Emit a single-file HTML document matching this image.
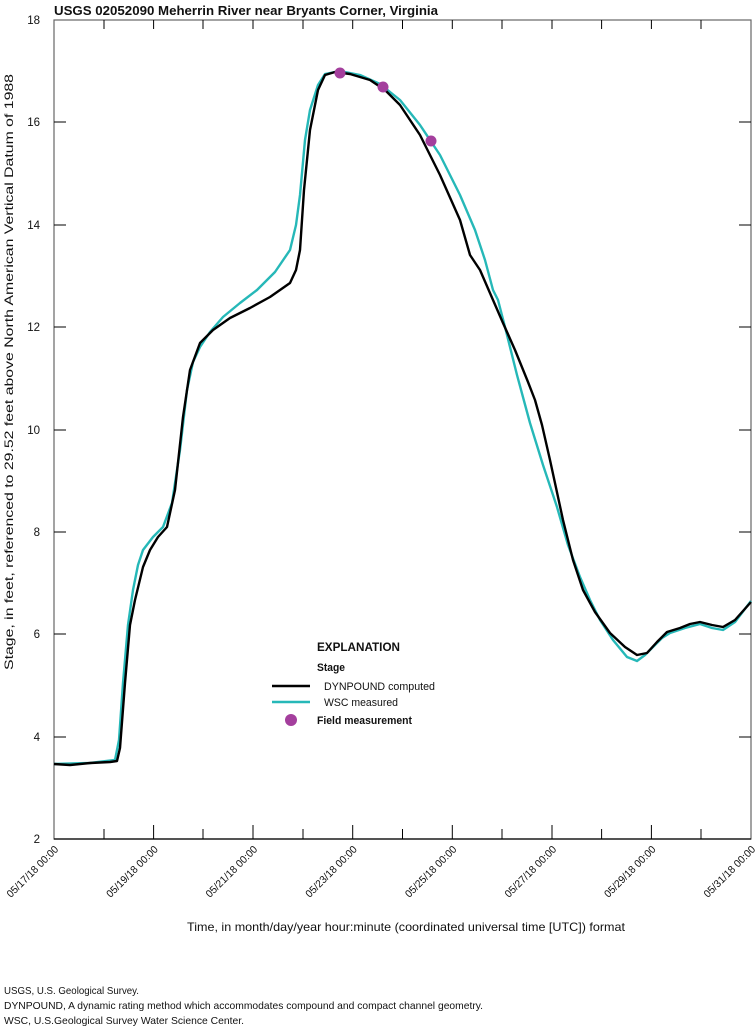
<!DOCTYPE html>
<html><head><meta charset="utf-8"><style>
html,body{margin:0;padding:0;background:#fff}
svg{display:block}
text{font-family:"Liberation Sans",sans-serif;fill:#111}
</style></head><body>
<svg width="756" height="1029" viewBox="0 0 756 1029" xmlns="http://www.w3.org/2000/svg">
<text x="54" y="15" font-size="13" font-weight="bold" textLength="384" lengthAdjust="spacingAndGlyphs">USGS 02052090 Meherrin River near Bryants Corner, Virginia</text>
<rect x="54" y="20" width="697" height="819" fill="none" stroke="#666" stroke-width="1.2"/>
<line x1="54" y1="839" x2="751" y2="839" stroke="#000" stroke-width="1.3"/>
<g stroke="#000" stroke-width="1">
<line x1="54" y1="122" x2="66" y2="122"/><line x1="54" y1="225" x2="66" y2="225"/><line x1="54" y1="327" x2="66" y2="327"/><line x1="54" y1="430" x2="66" y2="430"/><line x1="54" y1="532" x2="66" y2="532"/><line x1="54" y1="634" x2="66" y2="634"/><line x1="54" y1="737" x2="66" y2="737"/>
<line x1="751" y1="122" x2="739" y2="122"/><line x1="751" y1="225" x2="739" y2="225"/><line x1="751" y1="327" x2="739" y2="327"/><line x1="751" y1="430" x2="739" y2="430"/><line x1="751" y1="532" x2="739" y2="532"/><line x1="751" y1="634" x2="739" y2="634"/><line x1="751" y1="737" x2="739" y2="737"/>
<line x1="104" y1="839" x2="104" y2="829"/><line x1="153.6" y1="839" x2="153.6" y2="825"/>
<line x1="203" y1="839" x2="203" y2="829"/><line x1="253" y1="839" x2="253" y2="825"/>
<line x1="303" y1="839" x2="303" y2="829"/><line x1="352.7" y1="839" x2="352.7" y2="825"/>
<line x1="402.5" y1="839" x2="402.5" y2="829"/><line x1="452.3" y1="839" x2="452.3" y2="825"/>
<line x1="502" y1="839" x2="502" y2="829"/><line x1="552" y1="839" x2="552" y2="825"/>
<line x1="601.6" y1="839" x2="601.6" y2="829"/><line x1="651.4" y1="839" x2="651.4" y2="825"/>
<line x1="701" y1="839" x2="701" y2="829"/>
<line x1="104" y1="20" x2="104" y2="29"/><line x1="153.6" y1="20" x2="153.6" y2="29"/><line x1="203" y1="20" x2="203" y2="29"/><line x1="253" y1="20" x2="253" y2="29"/><line x1="303" y1="20" x2="303" y2="29"/><line x1="352.7" y1="20" x2="352.7" y2="29"/><line x1="402.5" y1="20" x2="402.5" y2="29"/><line x1="452.3" y1="20" x2="452.3" y2="29"/><line x1="502" y1="20" x2="502" y2="29"/><line x1="552" y1="20" x2="552" y2="29"/><line x1="601.6" y1="20" x2="601.6" y2="29"/><line x1="651.4" y1="20" x2="651.4" y2="29"/><line x1="701" y1="20" x2="701" y2="29"/>
</g>
<g font-size="11.5" text-anchor="end">
<text x="40" y="24">18</text><text x="40" y="126">16</text><text x="40" y="229">14</text><text x="40" y="331">12</text><text x="40" y="434">10</text><text x="40" y="536">8</text><text x="40" y="638">6</text><text x="40" y="741">4</text><text x="40" y="843">2</text>
</g>
<text transform="translate(13,372) rotate(-90)" font-size="12" text-anchor="middle" textLength="596" lengthAdjust="spacingAndGlyphs">Stage, in feet, referenced to 29.52 feet above North American Vertical Datum of 1988</text>
<g font-size="10.5" text-anchor="end">
<text transform="translate(59,850) rotate(-45)" textLength="68" lengthAdjust="spacingAndGlyphs">05/17/18 00:00</text>
<text transform="translate(158.6,850) rotate(-45)" textLength="68" lengthAdjust="spacingAndGlyphs">05/19/18 00:00</text>
<text transform="translate(258,850) rotate(-45)" textLength="68" lengthAdjust="spacingAndGlyphs">05/21/18 00:00</text>
<text transform="translate(357.7,850) rotate(-45)" textLength="68" lengthAdjust="spacingAndGlyphs">05/23/18 00:00</text>
<text transform="translate(457.3,850) rotate(-45)" textLength="68" lengthAdjust="spacingAndGlyphs">05/25/18 00:00</text>
<text transform="translate(557,850) rotate(-45)" textLength="68" lengthAdjust="spacingAndGlyphs">05/27/18 00:00</text>
<text transform="translate(656.4,850) rotate(-45)" textLength="68" lengthAdjust="spacingAndGlyphs">05/29/18 00:00</text>
<text transform="translate(756,850) rotate(-45)" textLength="68" lengthAdjust="spacingAndGlyphs">05/31/18 00:00</text>
</g>
<text x="187" y="931" font-size="12" textLength="438" lengthAdjust="spacingAndGlyphs">Time, in month/day/year hour:minute (coordinated universal time [UTC]) format</text>
<polyline fill="none" stroke="#26b8b8" stroke-width="2.4" stroke-linejoin="round" points="54,764 90,763 115,760 119,740 123,683 128,625 133,590 138,565 143,550 153,537 163,527 172,503 180,450 187,390 193,362 200,347 210,332 223,317 240,303 257,290 275,272 290,250 296,225 300,195 305,140 310,110 318,85 325,74 340,71 360,75 380,84 400,100 420,125 440,155 460,195 475,230 485,260 493,290 498,300 505,327 517,375 530,423 543,465 557,507 568,545 580,577 590,600 600,620 613,640 627,657 637,661 645,655 653,647 662,638 670,633 685,628 700,624 712,628 723,630 735,622 751,601"/>
<polyline fill="none" stroke="#000" stroke-width="2.4" stroke-linejoin="round" points="54,764 70,765 90,763 110,762 117,761 120,748 125,683 130,625 135,600 143,567 150,550 158,537 167,527 175,490 183,417 190,370 200,343 213,330 230,318 250,308 270,297 290,283 296,270 300,250 304,190 310,130 318,90 325,75 335,72 350,74 370,80 385,90 400,105 420,135 440,175 460,220 470,255 480,270 493,300 503,323 515,350 528,382 535,400 542,425 550,460 563,520 573,560 583,590 595,612 610,633 625,647 637,655 647,653 657,642 667,632 680,628 690,624 700,622 712,625 723,627 735,620 751,602"/>
<g fill="#a43f9d"><circle cx="340" cy="73" r="5.5"/><circle cx="383" cy="87" r="5.5"/><circle cx="431" cy="141" r="5.5"/></g>
<text x="317" y="651" font-size="12" font-weight="bold" textLength="83" lengthAdjust="spacingAndGlyphs">EXPLANATION</text>
<text x="317" y="671" font-size="11" font-weight="bold" textLength="28" lengthAdjust="spacingAndGlyphs">Stage</text>
<line x1="272" y1="686" x2="310" y2="686" stroke="#000" stroke-width="2.4"/>
<text x="324" y="690" font-size="11" textLength="111" lengthAdjust="spacingAndGlyphs">DYNPOUND computed</text>
<line x1="272" y1="702" x2="310" y2="702" stroke="#26b8b8" stroke-width="2.4"/>
<text x="324" y="706" font-size="11" textLength="74" lengthAdjust="spacingAndGlyphs">WSC measured</text>
<circle cx="291" cy="720" r="6" fill="#a43f9d"/>
<text x="317" y="724" font-size="11" font-weight="bold" textLength="95" lengthAdjust="spacingAndGlyphs">Field measurement</text>
<g font-size="10.5">
<text x="4" y="994" textLength="135" lengthAdjust="spacingAndGlyphs">USGS, U.S. Geological Survey.</text>
<text x="4" y="1009" textLength="479" lengthAdjust="spacingAndGlyphs">DYNPOUND, A dynamic rating method which accommodates compound and compact channel geometry.</text>
<text x="4" y="1024" textLength="240" lengthAdjust="spacingAndGlyphs">WSC, U.S.Geological Survey Water Science Center.</text>
</g>
</svg>
</body></html>
